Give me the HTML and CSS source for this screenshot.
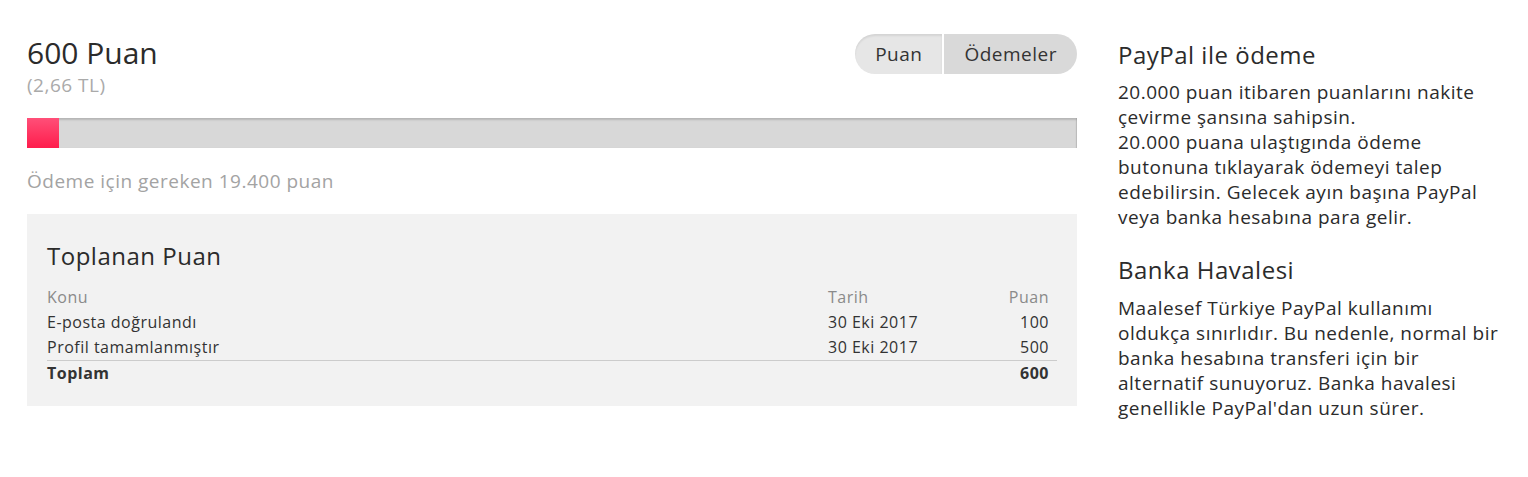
FILE: index.html
```html
<!DOCTYPE html>
<html>
<head>
    <title>Puan</title>
    <link rel="stylesheet" href="styles.css">
</head>
<body>
    <div class="sayfa">
        <div class="sol">
            <div class="ust">
                <div>
                    <h1 class="puan_baslik">600 Puan</h1>
                    <div class="tl">(2,66 TL)</div>
                </div>
                <div class="sekmeler">
                    <button class="sekme aktif">Puan</button>
                    <button class="sekme">Ödemeler</button>
                </div>
            </div>
            <div class="ilerleme"><div class="dolu" style="width: 32px;"></div></div>
            <p class="gereken">Ödeme için gereken 19.400 puan</p>
            <div class="kutu">
                <h2>Toplanan Puan</h2>
                <table>
                    <thead>
                        <tr><th>Konu</th><th class="tarih">Tarih</th><th class="sayi">Puan</th></tr>
                    </thead>
                    <tbody>
                        <tr><td>E-posta doğrulandı</td><td class="tarih">30 Eki 2017</td><td class="sayi">100</td></tr>
                        <tr><td>Profil tamamlanmıştır</td><td class="tarih">30 Eki 2017</td><td class="sayi">500</td></tr>
                        <tr class="toplam"><td>Toplam</td><td class="tarih"></td><td class="sayi">600</td></tr>
                    </tbody>
                </table>
            </div>
        </div>
        <div class="sag">
            <h2>PayPal ile ödeme</h2>
            <p>20.000 puan itibaren puanlarını nakite çevirme şansına sahipsin.<br>20.000 puana ulaştıgında ödeme butonuna tıklayarak ödemeyi talep edebilirsin. Gelecek ayın başına PayPal veya banka hesabına para gelir.</p>
            <h2 class="ikinci">Banka Havalesi</h2>
            <p>Maalesef Türkiye PayPal kullanımı oldukça sınırlıdır. Bu nedenle, normal bir banka hesabına transferi için bir alternatif sunuyoruz. Banka havalesi genellikle PayPal'dan uzun sürer.</p>
        </div>
    </div>
</body>
</html>
```

FILE: styles.css
```css
body { margin: 0; font-family: "Open Sans", sans-serif; color: #333; background: #fff; }
.sayfa { display: flex; gap: 41px; padding: 33px 27px; }
.sol { width: 1050px; flex: none; }
.sag { width: 392px; flex: none; }

.ust { display: flex; justify-content: space-between; align-items: flex-start; }
.puan_baslik { font-size: 30px; font-weight: normal; line-height: 40px; margin: 0; color: #2b2b2b; }
.tl { font-size: 19px; letter-spacing: 0.5px; line-height: 25px; color: #aaa; }

.sekmeler { display: flex; gap: 2px; margin-top: 1px; }
.sekme { font-family: inherit; font-size: 19px; letter-spacing: 0.5px; color: #333; border: none; height: 40px; padding: 0 20px; background: #d9d9d9; cursor: pointer; }
.sekme:first-child { border-radius: 20px 0 0 20px; }
.sekme:last-child { border-radius: 0 20px 20px 0; }
.sekme.aktif { background: #e6e6e6; box-shadow: inset 0 2px 2px rgba(0,0,0,0.08); }

.ilerleme { height: 30px; margin-top: 20px; background: #d8d8d8; box-shadow: inset 0 2px 2px rgba(0,0,0,0.15), inset -1px 0 1px rgba(0,0,0,0.1); }
.dolu { height: 100%; background: linear-gradient(#ff4f78, #ff1d4c); }

.gereken { font-size: 19px; letter-spacing: 0.5px; line-height: 25px; color: #a3a3a3; margin: 21px 0 20px; }

.kutu { background: #f2f2f2; padding: 26px 20px 20px; }
.kutu h2 { font-size: 24px; letter-spacing: 0.5px; font-weight: normal; line-height: 32px; margin: 0 0 13px; color: #2b2b2b; }
table { width: 100%; border-collapse: collapse; font-size: 16px; letter-spacing: 0.5px; }
th, td { padding: 0 8px; line-height: 25px; text-align: left; }
th:first-child, td:first-child { padding-left: 0; }
th { font-weight: normal; color: #8a8a8a; }
.tarih { width: 134px; }
.sayi { width: 71px; text-align: right; }
.toplam td { border-top: 1px solid #ccc; font-weight: bold; }

.sag h2 { font-size: 24px; letter-spacing: 0.5px; font-weight: normal; line-height: 32px; margin: 6px 0 9px; color: #2b2b2b; }
.sag h2.ikinci { margin-top: 24px; margin-bottom: 10px; }
.sag p { font-size: 19px; letter-spacing: 0.5px; line-height: 25px; margin: 0; color: #2b2b2b; }
```
